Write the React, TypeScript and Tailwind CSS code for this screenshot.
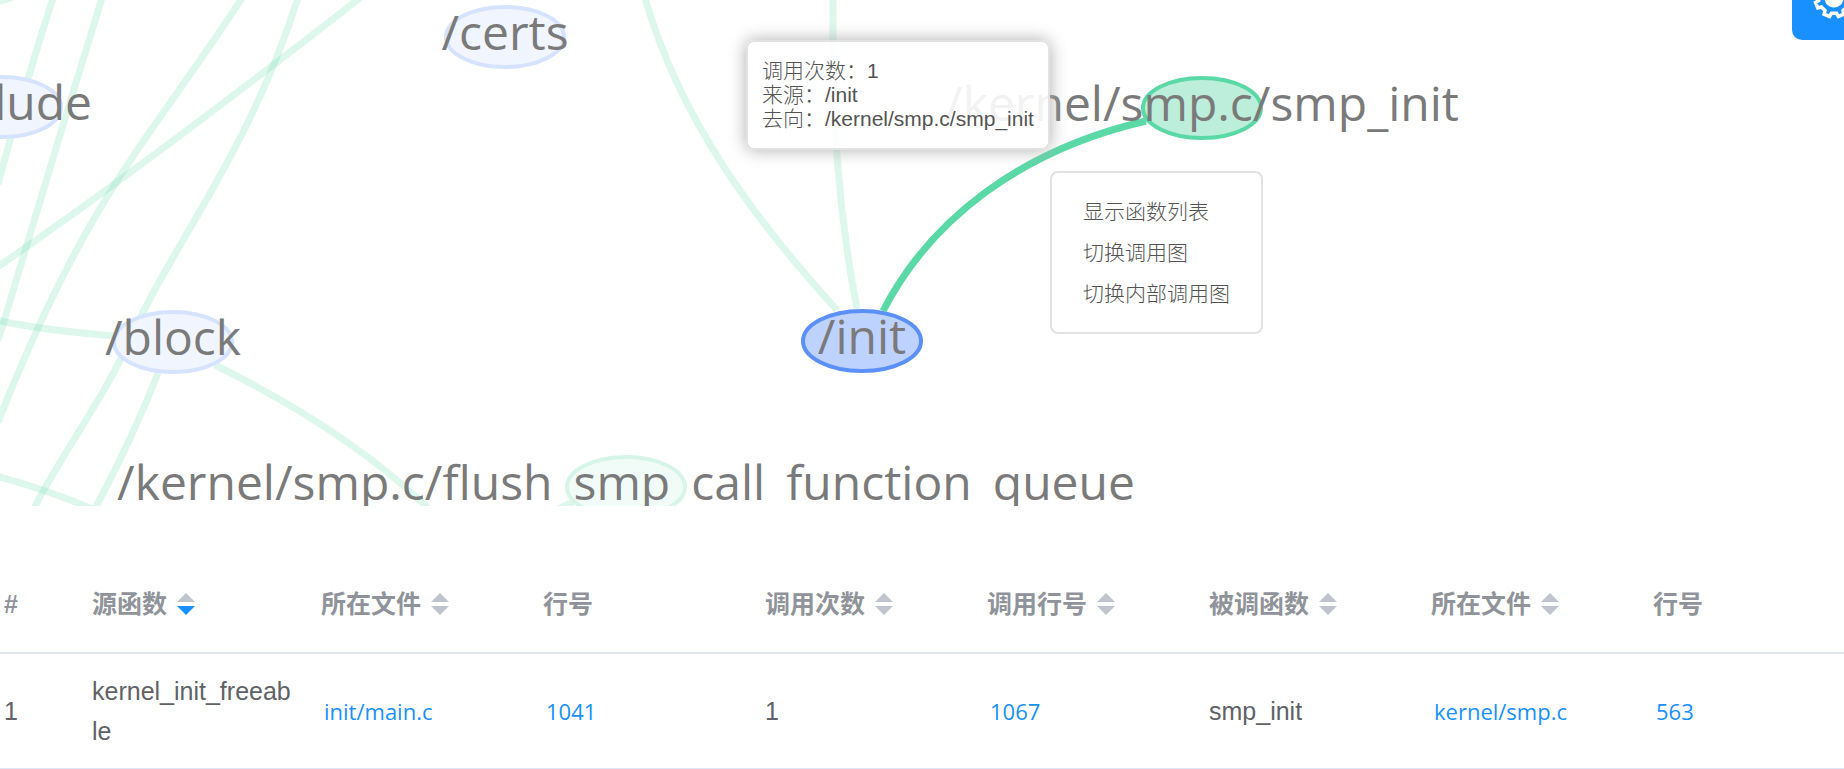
import { Fragment } from "react";

type Sort = "none" | "desc" | null;

const EDGES = [
  "M-4 2 Q8 0 16 -5",
  "M53 -2 Q24 88 -2 184",
  "M102 -2 Q52 160 2 328 L-2 340",
  "M242 -2 C150 140 90 190 -2 422",
  "M298 -2 C250 150 170 250 136 327 S60 455 31 514",
  "M360 -2 C265 72 110 190 -4 268",
  "M-4 320 Q40 330 115 336",
  "M158 373 Q132 440 92 514",
  "M-4 476 Q50 490 104 514",
  "M215 365 C290 402 370 450 434 514",
  "M548 514 L573 502",
  "M645 -2 C680 120 755 220 837 310",
  "M833 -2 C832 120 838 210 857 309",
];

const NODES = [
  { label: "/include", x: 2, y: 107, kind: "dir" },
  { label: "/certs", x: 505, y: 37, kind: "dir" },
  { label: "/block", x: 173, y: 342, kind: "dir" },
  { label: "/init", x: 862, y: 341, kind: "dirActive" },
  { label: "/kernel/smp.c/smp_init", x: 1202, y: 108, kind: "fnActive" },
  { label: "/kernel/smp.c/flush_smp_call_function_queue", x: 626, y: 487, kind: "fn" },
];

const NODE_STYLE: Record<string, string> = {
  dir: "fill-[#f1f5ff] stroke-[#d6e3ff]",
  dirActive: "fill-[#bed2ff] stroke-[#5b8ff9]",
  fn: "fill-[#f1fcf8] stroke-[#d6f5e8]",
  fnActive: "fill-[#bdeedb] stroke-[#5ad8a6]",
};

const COLUMNS: { title: string; sort: Sort; width: string }[] = [
  { title: "#", sort: null, width: "w-[88px]" },
  { title: "源函数", sort: "desc", width: "w-[229px]" },
  { title: "所在文件", sort: "none", width: "w-[222px]" },
  { title: "行号", sort: null, width: "w-[222px]" },
  { title: "调用次数", sort: "none", width: "w-[222px]" },
  { title: "调用行号", sort: "none", width: "w-[222px]" },
  { title: "被调函数", sort: "none", width: "w-[222px]" },
  { title: "所在文件", sort: "none", width: "w-[222px]" },
  { title: "行号", sort: null, width: "" },
];

const ROW: { text: string; link?: boolean }[] = [
  { text: "1" },
  { text: "kernel_init_freeable" },
  { text: "init/main.c", link: true },
  { text: "1041", link: true },
  { text: "1" },
  { text: "1067", link: true },
  { text: "smp_init" },
  { text: "kernel/smp.c", link: true },
  { text: "563", link: true },
];

const MENU = ["显示函数列表", "切换调用图", "切换内部调用图"];

function polar(radius: number, degrees: number) {
  const a = (degrees * Math.PI) / 180;
  return `${(22 + radius * Math.cos(a)).toFixed(2)} ${(22 + radius * Math.sin(a)).toFixed(2)}`;
}

const GEAR = `M${Array.from({ length: 8 }, (_, k) => {
  const mid = 22.5 + 45 * k;
  return [polar(15.5, mid - 13), polar(19, mid - 9), polar(19, mid + 9), polar(15.5, mid + 13)].join(" L");
}).join(" L")}Z`;

function SortIcon({ sort }: { sort: Sort }) {
  return (
    <svg width="18" height="22" viewBox="0 0 18 22" aria-hidden="true">
      <path d="M0 9 L9 0 L18 9Z" className="fill-[#c0c4cc]" />
      <path d="M0 13 L9 22 L18 13Z" className={sort === "desc" ? "fill-[#1890ff]" : "fill-[#c0c4cc]"} />
    </svg>
  );
}

function NodeLabel({ label, x, y }: { label: string; x: number; y: number }) {
  return (
    <text
      x={x}
      y={y}
      textAnchor="middle"
      className="fill-[#7a7a7a] font-['Open_Sans','Noto_Sans',sans-serif] text-[48px]"
    >
      {label.split("_").map((part, i) => (
        <Fragment key={i}>
          {i > 0 && <tspan dy="4">_</tspan>}
          <tspan dy={i > 0 ? -4 : 0}>{part}</tspan>
        </Fragment>
      ))}
    </text>
  );
}

function Graph() {
  return (
    <section aria-label="调用图" className="relative h-[506px] overflow-hidden">
      <svg className="block h-full w-full" role="img" aria-label="函数调用关系">
        <g fill="none" stroke="#5ad8a6" strokeWidth="7">
          {EDGES.map((d) => (
            <path key={d} d={d} strokeOpacity="0.2" />
          ))}
        </g>
        {NODES.map((n) => (
          <ellipse key={n.label} cx={n.x} cy={n.y} rx="59" ry="30" strokeWidth="4" className={NODE_STYLE[n.kind]} />
        ))}
        <path d="M883 311 C930 220 1020 150 1146 121" fill="none" stroke="#5ad8a6" strokeWidth="7" />
        {NODES.map((n) => (
          <NodeLabel key={n.label} label={n.label} x={n.x} y={n.y + 13} />
        ))}
      </svg>

      <div
        role="tooltip"
        className="absolute top-10 left-[746px] rounded-lg border-2 border-[#e2e2e2] bg-white/90 px-3.5 py-[17px] text-[21px] leading-6 font-light text-[#545454] shadow-[0_0_17px_#aeaeae]"
      >
        <p>调用次数：1</p>
        <p>来源：/init</p>
        <p>去向：/kernel/smp.c/smp_init</p>
      </div>

      <ul className="absolute top-[171px] left-[1050px] rounded-lg border-2 border-[#e2e2e2] bg-white px-[31px] py-[18px] text-[21px] leading-[41px] font-light text-[#545454]">
        {MENU.map((item) => (
          <li key={item}>
            <button type="button" className="block">{item}</button>
          </li>
        ))}
      </ul>

      <button
        type="button"
        aria-label="设置"
        className="absolute -top-11 right-0 flex h-[84px] w-[52px] items-center overflow-hidden rounded-l-[10px] bg-[#1890ff] pl-5 text-white"
      >
        <svg width="44" height="44" viewBox="0 0 44 44" className="shrink-0" aria-hidden="true">
          <path d={GEAR} fill="none" stroke="currentColor" strokeWidth="3.5" />
          <circle cx="22" cy="22" r="9.500" fill="currentColor" />
        </svg>
      </button>
    </section>
  );
}

export default function App() {
  return (
    <main className="overflow-x-hidden bg-white font-['Liberation_Sans','Noto_Sans_CJK_SC',sans-serif]">
      <Graph />
      <table className="mt-[50px] w-full table-fixed border-collapse text-left">
        <thead>
          <tr className="h-[97px] border-b-2 border-[#dfe6ec] text-[25px] leading-10 text-[#909399]">
            {COLUMNS.map((c, i) => (
              <th key={i} className={`${c.width} p-0 pl-1 font-bold`}>
                {c.sort ? (
                  <button type="button" className="flex items-center gap-2.5">
                    {c.title}
                    <SortIcon sort={c.sort} />
                  </button>
                ) : (
                  c.title
                )}
              </th>
            ))}
          </tr>
        </thead>
        <tbody>
          <tr className="h-[115px] border-b border-[#dfe6f5] text-[25px] leading-10 text-[#606266]">
            {ROW.map((cell, i) => (
              <td key={i} className="p-0 pr-6 pl-1 break-all">
                {cell.link ? (
                  <a href="#source" className="ml-[3px] font-['Open_Sans','Noto_Sans',sans-serif] text-[22px] text-[#1890ff]">
                    {cell.text}
                  </a>
                ) : (
                  cell.text
                )}
              </td>
            ))}
          </tr>
        </tbody>
      </table>
    </main>
  );
}
